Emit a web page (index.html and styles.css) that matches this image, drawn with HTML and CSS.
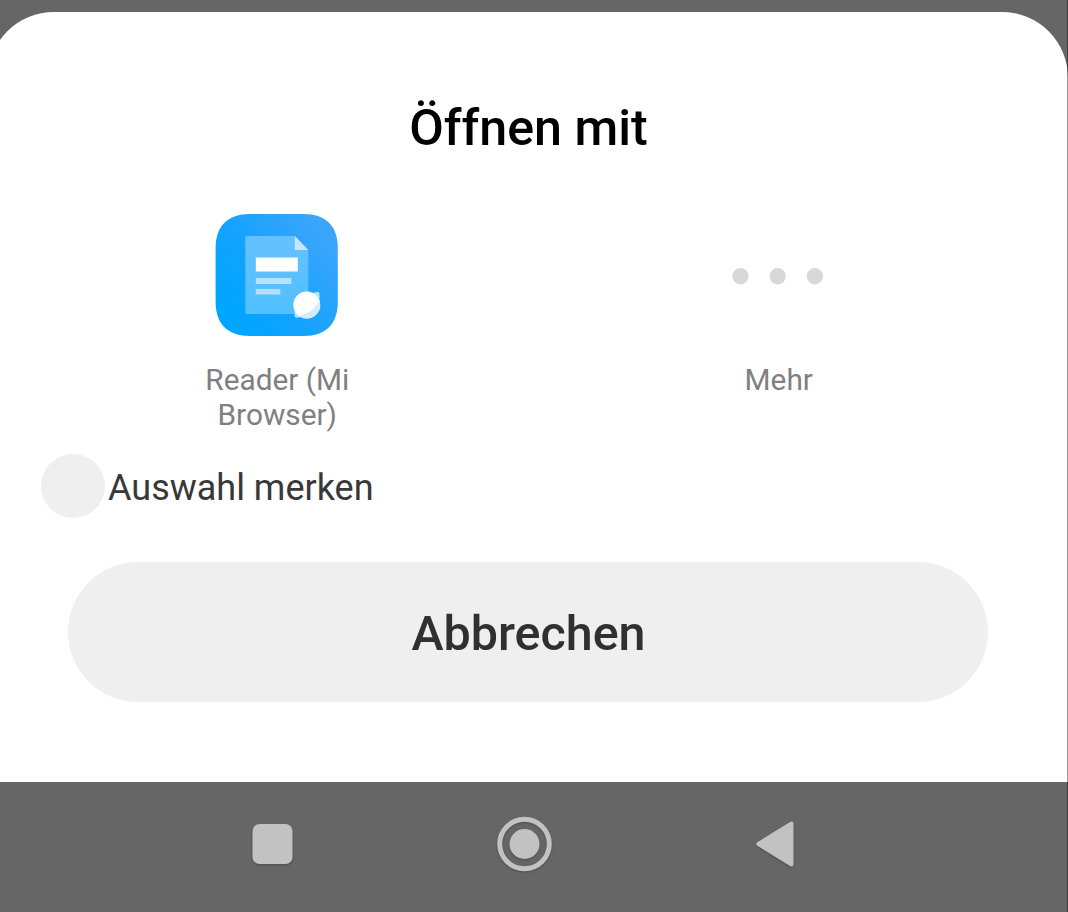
FILE: index.html
```html
<!DOCTYPE html>
<html lang="de">
<head>
<meta charset="utf-8">
<title>Öffnen mit</title>
<link rel="stylesheet" href="styles.css">
</head>
<body>
<div class="screen">
  <main class="sheet">
    <h1 class="title">Öffnen mit</h1>
    <div class="apps">
      <div class="app">
        <svg class="app-icon" viewBox="-.8 0 124 124">
          <defs>
            <linearGradient id="tile" x1=".1" y1=".8" x2=".9" y2=".2">
              <stop offset="0" stop-color="#00a6ff"/>
              <stop offset=".4" stop-color="#12a2ff"/>
              <stop offset="1" stop-color="#3ba5fc"/>
            </linearGradient>
            <linearGradient id="page" x1="0" y1="0" x2="0" y2="1">
              <stop offset="0" stop-color="#67c0fe"/>
              <stop offset="1" stop-color="#50c0ff"/>
            </linearGradient>
          </defs>
          <path fill="url(#tile)" d="M35 1H89C111 1 123 13 123 35V89C123 111 111 123 89 123H35C13 123 .8 111 .8 89V35C.8 13 13 1 35 1Z"/>
          <path fill="url(#page)" d="M32 23H80L93.500 37V101H32Q30.500 101 30.500 99.500V24.500Q30.500 23 32 23Z"/>
          <path fill="#c4e7ff" d="M80 23L93.500 37H80Z"/>
          <path fill="#fff" d="M41 44.500H83V58.500H41Z"/>
          <path fill="#b3e1ff" d="M41 65H76.500V71H41ZM41 76H65.500V81.500H41Z"/>
          <path fill="#a8ebff" d="M98 80Q104.500 78 104.500 80Q105.500 84 104 89L86 104Q80 105.500 80 103.500Q79 101 81 96Z"/>
          <circle cx="92" cy="92" r="13.500" fill="#fff"/>
          <path fill="#d3ebff" d="M104.500 87.500C107 96.500 101 105.500 92 105.500Q88 105.500 84.500 103C94 100.500 101 95 104.500 87.500Z"/>
        </svg>
        <span class="app-name">Reader (Mi<br>Browser)</span>
      </div>
      <div class="app">
        <svg class="dots" viewBox="0 0 124 124">
          <circle cx="24.500" cy="63.300" r="8.200"/>
          <circle cx="61.700" cy="63.300" r="8.200"/>
          <circle cx="98.900" cy="63.300" r="8.200"/>
        </svg>
        <span class="app-name">Mehr</span>
      </div>
    </div>
    <div class="remember"><span class="check"></span><span class="remember-text">Auswahl merken</span></div>
    <button class="cancel">Abbrechen</button>
  </main>
  <nav class="navbar">
    <svg class="nav-icons" viewBox="0 0 1068 130">
      <g class="glyph">
        <rect x="252.500" y="42" width="40" height="40" rx="7"/>
        <circle cx="524.500" cy="62" r="15"/>
        <circle class="ring" cx="524.500" cy="62" r="24.800"/>
        <path class="back" d="M758.300 62L791.500 41.500V82.500Z"/>
      </g>
    </svg>
  </nav>
  <div class="edge"></div>
</div>
</body>
</html>
```
FILE: styles.css
```css
body {
  margin: 0;
  font-family: Roboto, sans-serif;
}
.screen {
  position: relative;
  width: 1068px;
  height: 912px;
  overflow: hidden;
  background: #666;
}
.screen::before {
  content: "";
  display: block;
  height: 12px;
}
.sheet {
  box-sizing: border-box;
  width: 1080px;
  height: 770px;
  margin-left: -12px;
  padding-top: 86px;
  border-radius: 66px 66px 0 0;
  background: #fff;
}
.title {
  margin: 0;
  padding-left: 1px;
  font-size: 50.200px;
  line-height: 60px;
  font-weight: 500;
  text-align: center;
  color: #000;
}
.apps {
  display: grid;
  grid-template-columns: 1fr 1fr;
  margin: 55px 39px 0 38px;
}
.app {
  display: flex;
  flex-direction: column;
  align-items: center;
}
.app-icon,
.dots {
  width: 124px;
  height: 124px;
  margin-right: 1px;
}
.dots {
  fill: #d8d8d8;
}
.app-name {
  margin-top: 25px;
  padding-left: 1px;
  font-size: 29.800px;
  line-height: 35px;
  text-align: center;
  color: #808080;
}
.remember {
  display: flex;
  align-items: center;
  gap: 3.500px;
  margin: 22px 0 0 52.500px;
}
.check {
  width: 64px;
  height: 64px;
  border-radius: 50%;
  background: #efefef;
}
.remember-text {
  padding-top: 4px;
  font-size: 36px;
  line-height: 42px;
  color: #383838;
}
.cancel {
  display: block;
  width: 920px;
  height: 140px;
  margin: 44px auto 0;
  padding: 4px 0 0 1px;
  border: 0;
  border-radius: 70px;
  background: #efefef;
  font: 500 48.400px/56px Roboto, sans-serif;
  color: #303030;
}
.navbar {
  height: 130px;
}
.nav-icons {
  display: block;
  width: 1068px;
  height: 130px;
}
.glyph {
  fill: #c2c2c2;
  filter: drop-shadow(0 1px 1px rgba(0, 0, 0, .25));
}
.ring {
  fill: none;
  stroke: #c2c2c2;
  stroke-width: 5;
}
.back {
  stroke: #c2c2c2;
  stroke-width: 4;
  stroke-linejoin: round;
}
.edge {
  position: absolute;
  top: 0;
  right: 0;
  width: 1px;
  height: 100%;
  background: rgba(0, 0, 0, .4);
}
```
